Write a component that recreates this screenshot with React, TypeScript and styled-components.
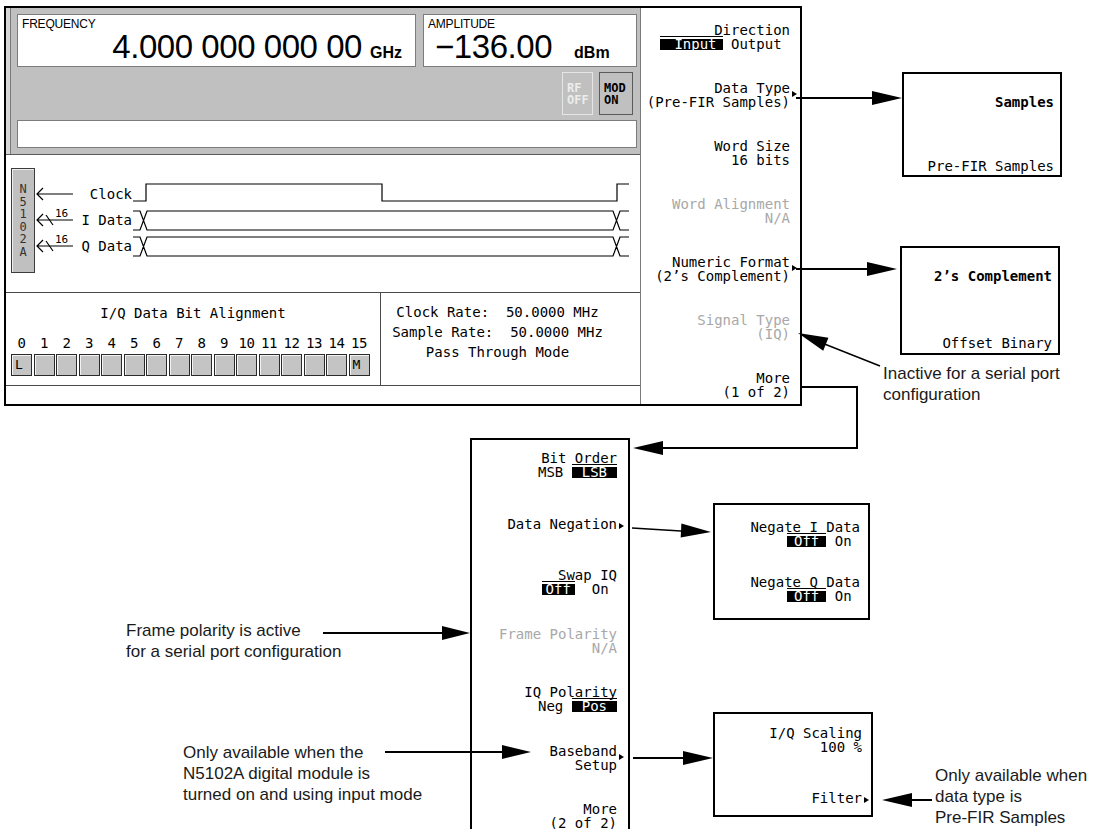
import React from "react";
import styled, { createGlobalStyle } from "styled-components";

const MONO = `"DejaVu Sans Mono", "Liberation Mono", monospace`;

const GlobalStyle = createGlobalStyle`
  html, body { margin: 0; padding: 0; background: #fff; }
  body { font-family: "Liberation Sans", Arial, sans-serif; color: #000; }
`;

const Canvas = styled.div`
  position: relative;
  width: 1103px;
  height: 829px;
  overflow: hidden;
  background: #fff;
`;

/* ---------- instrument screen ---------- */

const Screen = styled.div`
  position: absolute;
  left: 4px;
  top: 6px;
  width: 798px;
  height: 400px;
  box-sizing: border-box;
  border: 2px solid #000;
  display: grid;
  grid-template-columns: 634px 1fr;
  background: #fff;
`;

const Display = styled.div`
  display: flex;
  flex-direction: column;
`;

const Header = styled.div`
  height: 147px;
  box-sizing: border-box;
  background: #c0c0c0;
  border-bottom: 1px solid #5a5a5a;
  box-shadow: inset 4px 0 0 #d6d6d6, inset 5px 0 0 #7a7a7a;
  padding: 6px 3px 6px 11px;
  display: flex;
  flex-direction: column;
  gap: 5px;
`;

const ReadoutRow = styled.div`
  display: flex;
  gap: 7px;
  height: 53px;
`;

const Readout = styled.div<{ $w: number }>`
  width: ${(p) => p.$w}px;
  box-sizing: border-box;
  background: #fff;
  border: 1px solid #7c7c7c;
  display: flex;
  flex-direction: column;
`;

const ReadoutLabel = styled.div`
  font-size: 12px;
  line-height: 12px;
  padding: 3px 0 0 4px;
  letter-spacing: -0.2px;
`;

const ReadoutValue = styled.div<{ $end?: boolean; $pl: number; $pr: number }>`
  display: flex;
  align-items: baseline;
  justify-content: ${(p) => (p.$end ? "flex-end" : "flex-start")};
  padding: 0 ${(p) => p.$pr}px 0 ${(p) => p.$pl}px;
`;

const Big = styled.span`
  font-size: 33px;
  line-height: 33px;
  letter-spacing: -0.45px;
`;

const Unit = styled.span<{ $gap: number }>`
  margin-left: ${(p) => p.$gap}px;
  font-size: 16px;
  font-weight: bold;
`;

const ButtonRow = styled.div`
  height: 43px;
  display: flex;
  justify-content: flex-end;
  gap: 6px;
  padding-right: 4px;
`;

const StateButton = styled.div<{ $off?: boolean; $w: number }>`
  width: ${(p) => p.$w}px;
  box-sizing: border-box;
  background: #c0c0c0;
  border: 1px solid ${(p) => (p.$off ? "#e6e6e6" : "#5c5c5c")};
  color: ${(p) => (p.$off ? "#ececec" : "#000")};
  font: bold 12px/12px ${MONO};
  display: flex;
  flex-direction: column;
  justify-content: center;
  padding-left: 4px;
`;

const Message = styled.div`
  height: 28px;
  box-sizing: border-box;
  background: #fff;
  border: 1px solid #7c7c7c;
`;

const Timing = styled.div`
  height: 138px;
  box-sizing: border-box;
  border-bottom: 1px solid #4a4a4a;
  display: flex;
  align-items: flex-start;
  padding-left: 5px;
`;

const ModuleTag = styled.div`
  margin-top: 13px;
  width: 24px;
  height: 105px;
  box-sizing: border-box;
  border: 1px solid #3c3c3c;
  background: #c0c0c0;
  box-shadow: inset 1px 1px 0 #eee;
  display: flex;
  flex-direction: column;
  align-items: center;
  justify-content: center;
  font: 12px/12.5px ${MONO};
  color: #333;
`;

const Signals = styled.div`
  margin-top: 26px;
  display: flex;
  flex-direction: column;
`;

const SignalRow = styled.div`
  display: flex;
  align-items: center;
  height: 26px;
`;

const SignalName = styled.div`
  width: 57px;
  padding-right: 1px;
  text-align: right;
  font: 14px/14px ${MONO};
  white-space: pre;
`;

const Info = styled.div`
  height: 93px;
  box-sizing: border-box;
  border-bottom: 1px solid #4a4a4a;
  display: grid;
  grid-template-columns: 375px 1fr;
`;

const BitPanel = styled.div`
  border-right: 1px solid #4a4a4a;
  display: flex;
  flex-direction: column;
  font: 14px/14px ${MONO};
`;

const BitTitle = styled.div`
  margin-top: 13px;
  text-align: center;
`;

const BitGrid = styled.div<{ $top: number }>`
  margin: ${(p) => p.$top}px 0 0 5px;
  display: grid;
  grid-template-columns: repeat(16, 21px);
  column-gap: 1.5px;
`;

const BitNumber = styled.div`
  text-align: center;
  white-space: nowrap;
  letter-spacing: -0.5px;
`;

const BitCell = styled.div`
  height: 22px;
  box-sizing: border-box;
  border: 1px solid #2a2a2a;
  background: #c4c4c4;
  box-shadow: inset 1px 1px 0 #f2f2f2;
  font: 13px/20px ${MONO};
  padding-left: 3px;
`;

const RatePanel = styled.div`
  display: flex;
  flex-direction: column;
  align-items: center;
  padding: 9px 26px 0 0;
  font: 14px/20px ${MONO};
  white-space: pre;
`;

const SoftKeys = styled.div`
  border-left: 1px solid #7a7a7a;
  display: grid;
  grid-auto-rows: 58px;
  overflow: hidden;
  padding-right: 10px;
`;

/* ---------- soft keys and menu panels ---------- */

const Key = styled.div<{ $dim?: boolean }>`
  display: flex;
  flex-direction: column;
  justify-content: center;
  align-items: flex-end;
  font: 14px/14px ${MONO};
  color: ${(p) => (p.$dim ? "#a8a8a8" : "#000")};
  white-space: pre;
`;

const KeyLine = styled.div`
  height: 14px;
`;

const Marker = styled.span<{ $low?: boolean }>`
  display: inline-block;
  width: 0;
  height: 0;
  border-left: 5px solid #000;
  border-top: 3.5px solid transparent;
  border-bottom: 3.5px solid transparent;
  margin: 0 -7px 0 2px;
  vertical-align: ${(p) => (p.$low ? "-4px" : "0px")};
`;

const Hi = styled.span<{ $pl: number; $pr: number }>`
  display: inline-block;
  padding: 3px ${(p) => p.$pr}px 0 ${(p) => p.$pl}px;
  margin-top: -3px;
  line-height: 11px;
  color: #fff;
  background:
    linear-gradient(#000, #000) 0 0 / 100% 1px no-repeat,
    linear-gradient(#000, #000) 0 3px / 100% calc(100% - 3px) no-repeat;
`;

const Panel = styled.div<{ $x: number; $y: number; $w: number; $h: number; $open?: boolean }>`
  position: absolute;
  left: ${(p) => p.$x}px;
  top: ${(p) => p.$y}px;
  width: ${(p) => p.$w}px;
  height: ${(p) => p.$h}px;
  box-sizing: border-box;
  border: 2px solid #000;
  border-bottom-width: ${(p) => (p.$open ? 0 : 2)}px;
  background: #fff;
`;

const KeyStack = styled.div<{ $row: number; $pr: number; $top: number }>`
  display: grid;
  grid-auto-rows: ${(p) => p.$row}px;
  margin-top: ${(p) => p.$top}px;
  padding-right: ${(p) => p.$pr}px;
`;

const ChoiceList = styled.div<{ $pt: number; $pb: number }>`
  height: 100%;
  box-sizing: border-box;
  display: flex;
  flex-direction: column;
  justify-content: space-between;
  align-items: flex-end;
  padding: ${(p) => p.$pt}px 6px ${(p) => p.$pb}px 0;
  font: 14px/13px ${MONO};
  white-space: pre;
`;

const Choice = styled.div<{ $bold?: boolean }>`
  font-weight: ${(p) => (p.$bold ? "bold" : "normal")};
`;

const Note = styled.div<{ $x: number; $y: number }>`
  position: absolute;
  left: ${(p) => p.$x}px;
  top: ${(p) => p.$y}px;
  font-size: 17px;
  line-height: 21px;
  color: #1a1a1a;
  white-space: pre;
`;

const Overlay = styled.svg`
  position: absolute;
  left: 0;
  top: 0;
  width: 1103px;
  height: 829px;
  pointer-events: none;
`;

type KeyDef = {
  lines: React.ReactNode[];
  dim?: boolean;
  sub?: boolean;
};

const SoftKey: React.FC<KeyDef> = ({ lines, dim, sub }) => (
  <Key $dim={dim}>
    {lines.map((l, i) => (
      <KeyLine key={i}>
        {l}
        {sub && i === 0 && <Marker $low={lines.length > 1} />}
      </KeyLine>
    ))}
  </Key>
);

const offOn = (pad: number, gap: string) => (
  <>
    <Hi $pl={pad} $pr={pad}>Off</Hi>
    {gap}On{" "}
  </>
);

const mainKeys: KeyDef[] = [
  { lines: ["Direction", <><Hi $pl={14} $pr={6}>Input</Hi> Output </>] },
  { lines: ["Data Type", "(Pre-FIR Samples)"], sub: true },
  { lines: ["Word Size", "16 bits"] },
  { lines: ["Word Alignment", "N/A"], dim: true },
  { lines: ["Numeric Format", "(2’s Complement)"], sub: true },
  { lines: ["Signal Type", "(IQ)"], dim: true },
  { lines: ["More", "(1 of 2)"] },
];

const moreKeys: KeyDef[] = [
  { lines: ["Bit Order", <>MSB <Hi $pl={10} $pr={10}>LSB</Hi></>] },
  { lines: ["Data Negation"], sub: true },
  { lines: ["Swap IQ", offOn(4, "  ")] },
  { lines: ["Frame Polarity", "N/A"], dim: true },
  { lines: ["IQ Polarity", <>Neg <Hi $pl={10} $pr={10}>Pos</Hi></>] },
  { lines: ["Baseband", "Setup"], sub: true },
  { lines: ["More", "(2 of 2)"] },
];

const negateKeys: KeyDef[] = [
  { lines: ["Negate I Data", offOn(7, " ")] },
  { lines: ["Negate Q Data", offOn(7, " ")] },
];

const scalingKeys: KeyDef[] = [
  { lines: ["I/Q Scaling", "100 %"] },
  { lines: ["Filter"], sub: true },
];

const bits = Array.from({ length: 16 }, (_, i) => i);

const SignalArrow: React.FC<{ bus?: boolean }> = ({ bus }) => (
  <svg width="40" height="26" viewBox="0 0 40 26">
    <path d="M8 7 L2 13 L8 19 M2 13 H38" fill="none" stroke="#000" strokeWidth="1.2" />
    {bus && (
      <>
        <path d="M11 8 L18 18" stroke="#000" strokeWidth="1.2" />
        <text x="20" y="10" fontFamily="DejaVu Sans Mono" fontSize="11">16</text>
      </>
    )}
  </svg>
);

const Wave: React.FC<{ bus?: boolean }> = ({ bus }) => (
  <svg width="496" height="26" viewBox="0 0 496 26">
    <path
      d={
        bus
          ? "M0 4 H7 L14 23 H480 L487 4 H496 M0 23 H7 L14 4 H480 L487 23 H496"
          : "M0 20 H13 V3 H249 V20 H484 V3 H496"
      }
      fill="none"
      stroke="#000"
      strokeWidth="1.2"
    />
  </svg>
);

const Head: React.FC<{ tip: [number, number]; from: [number, number]; len?: number; half?: number }> = ({
  tip,
  from,
  len = 30,
  half = 7,
}) => {
  const dx = tip[0] - from[0];
  const dy = tip[1] - from[1];
  const d = Math.hypot(dx, dy);
  const ux = dx / d;
  const uy = dy / d;
  const bx = tip[0] - ux * len;
  const by = tip[1] - uy * len;
  const pts = [
    [tip[0], tip[1]],
    [bx - uy * half, by + ux * half],
    [bx + uy * half, by - ux * half],
  ]
    .map((p) => p.join(","))
    .join(" ");
  return <polygon points={pts} fill="#000" />;
};

export default function App() {
  return (
    <>
      <GlobalStyle />
      <Canvas>
        <Screen>
          <Display>
            <Header>
              <ReadoutRow>
                <Readout $w={399}>
                  <ReadoutLabel>FREQUENCY</ReadoutLabel>
                  <ReadoutValue $end $pl={0} $pr={13}>
                    <Big>4.000 000 000 00</Big>
                    <Unit $gap={8}>GHz</Unit>
                  </ReadoutValue>
                </Readout>
                <Readout $w={214}>
                  <ReadoutLabel>AMPLITUDE</ReadoutLabel>
                  <ReadoutValue $pl={11} $pr={0}>
                    <Big>−136.00</Big>
                    <Unit $gap={22}>dBm</Unit>
                  </ReadoutValue>
                </Readout>
              </ReadoutRow>
              <ButtonRow>
                <StateButton $off $w={31}>
                  <span>RF</span>
                  <span>OFF</span>
                </StateButton>
                <StateButton $w={34}>
                  <span>MOD</span>
                  <span>ON</span>
                </StateButton>
              </ButtonRow>
              <Message />
            </Header>

            <Timing>
              <ModuleTag>
                {"N5102A".split("").map((c, i) => (
                  <span key={i}>{c}</span>
                ))}
              </ModuleTag>
              <Signals>
                <SignalRow>
                  <SignalArrow />
                  <SignalName>Clock</SignalName>
                  <Wave />
                </SignalRow>
                <SignalRow>
                  <SignalArrow bus />
                  <SignalName>I Data</SignalName>
                  <Wave bus />
                </SignalRow>
                <SignalRow>
                  <SignalArrow bus />
                  <SignalName>Q Data</SignalName>
                  <Wave bus />
                </SignalRow>
              </Signals>
            </Timing>

            <Info>
              <BitPanel>
                <BitTitle>I/Q Data Bit Alignment</BitTitle>
                <BitGrid $top={16}>
                  {bits.map((b) => (
                    <BitNumber key={b}>{b}</BitNumber>
                  ))}
                </BitGrid>
                <BitGrid $top={4}>
                  {bits.map((b) => (
                    <BitCell key={b}>{b === 0 ? "L" : b === 15 ? "M" : ""}</BitCell>
                  ))}
                </BitGrid>
              </BitPanel>
              <RatePanel>
                <span>Clock Rate:  50.0000 MHz</span>
                <span>Sample Rate:  50.0000 MHz</span>
                <span>Pass Through Mode</span>
              </RatePanel>
            </Info>
          </Display>

          <SoftKeys>
            {mainKeys.map((k, i) => (
              <SoftKey key={i} {...k} />
            ))}
          </SoftKeys>
        </Screen>

        <Panel $x={902} $y={72} $w={160} $h={105}>
          <ChoiceList $pt={22} $pb={2}>
            <Choice $bold>Samples</Choice>
            <Choice>Pre-FIR Samples</Choice>
          </ChoiceList>
        </Panel>

        <Panel $x={900} $y={246} $w={160} $h={109}>
          <ChoiceList $pt={22} $pb={3}>
            <Choice $bold>2’s Complement</Choice>
            <Choice>Offset Binary</Choice>
          </ChoiceList>
        </Panel>

        <Panel $x={470} $y={438} $w={160} $h={400} $open>
          <KeyStack $row={58.5} $pr={11} $top={-4}>
            {moreKeys.map((k, i) => (
              <SoftKey key={i} {...k} />
            ))}
          </KeyStack>
        </Panel>

        <Panel $x={713} $y={503} $w={157} $h={117}>
          <KeyStack $row={55} $pr={8} $top={1}>
            {negateKeys.map((k, i) => (
              <SoftKey key={i} {...k} />
            ))}
          </KeyStack>
        </Panel>

        <Panel $x={713} $y={712} $w={160} $h={105}>
          <KeyStack $row={58} $pr={9} $top={-3}>
            {scalingKeys.map((k, i) => (
              <SoftKey key={i} {...k} />
            ))}
          </KeyStack>
        </Panel>

        <Note $x={883} $y={363}>{"Inactive for a serial port\nconfiguration"}</Note>
        <Note $x={126} $y={620}>{"Frame polarity is active\nfor a serial port configuration"}</Note>
        <Note $x={183} $y={742}>
          {"Only available when the\nN5102A digital module is\nturned on and using input mode"}
        </Note>
        <Note $x={935} $y={765}>{"Only available when\ndata type is\nPre-FIR Samples"}</Note>

        <Overlay viewBox="0 0 1103 829">
          <g stroke="#000" strokeWidth="2" fill="none">
            <path d="M796 98 H872" />
            <path d="M796 269 H867" />
            <path d="M880 366 L822 343" strokeWidth="1.5" />
            <path d="M802 387 H857 V448 H662" />
            <path d="M323 633 H442" />
            <path d="M632 528 L681 531" strokeWidth="1.5" />
            <path d="M385 752 H502" />
            <path d="M633 758 H683" />
            <path d="M932 800 H911" />
          </g>
          <Head tip={[902, 98]} from={[796, 98]} />
          <Head tip={[897, 269]} from={[796, 269]} />
          <Head tip={[798, 333]} from={[880, 366]} />
          <Head tip={[633, 448]} from={[857, 448]} />
          <Head tip={[470, 633]} from={[323, 633]} len={28} />
          <Head tip={[711, 532]} from={[632, 528]} />
          <Head tip={[531, 752]} from={[385, 752]} len={29} />
          <Head tip={[713, 758]} from={[633, 758]} />
          <Head tip={[882, 800]} from={[932, 800]} />
        </Overlay>
      </Canvas>
    </>
  );
}
